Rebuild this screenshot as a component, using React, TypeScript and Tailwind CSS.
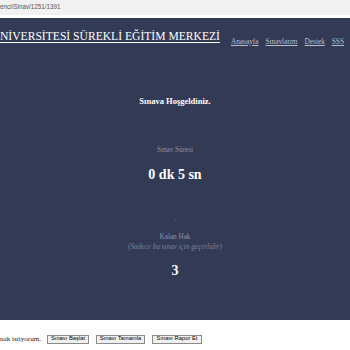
export default function App() {
  const serif = { fontFamily: '"Liberation Serif", "Times New Roman", serif' };
  const sans = { fontFamily: '"Liberation Sans", Arial, sans-serif' };
  return (
    <div className="w-[350px] h-[350px] overflow-hidden bg-white" style={serif}>
      <div className="h-[15px] bg-[#f1f1f1] flex items-center">
        <span className="text-[6.3px] leading-none text-[#555]" style={sans}>enci/Sinav/1251/1391</span>
      </div>
      <div className="h-[3px] bg-white" />
      <div className="h-[302px] bg-[#333a55] flex flex-col">
        <div className="flex items-start pt-[12px] whitespace-nowrap">
          <a className="text-[11.6px] leading-[14px] text-white underline decoration-1 underline-offset-[2px]">
            NİVERSİTESİ SÜREKLİ EĞİTİM MERKEZİ
          </a>
          <nav className="ml-[11px] mt-[4.5px] flex gap-[7px] text-[7.3px] leading-[14px] text-[#b9bdd2]">
            <a className="underline">Anasayfa</a>
            <a className="underline">Sınavlarım</a>
            <a className="underline">Destek</a>
            <a className="underline">SSS</a>
          </nav>
        </div>
        <div className="flex flex-col items-center text-center">
          <div className="mt-[47px] text-[8.5px] leading-[10px] font-bold text-white">Sınava Hoşgeldiniz.</div>
          <div className="mt-[39px] text-[7.2px] leading-[10px] text-[#8d93ab]">Sınav Süresi</div>
          <div className="mt-[12px] text-[14px] leading-[16px] font-bold text-white">0 dk 5 sn</div>
          <div className="mt-[31px] text-[7.2px] leading-[10px] text-[#8d93ab]">.</div>
          <div className="mt-[8px] text-[7.2px] leading-[10px] text-[#8d93ab]">Kalan Hak</div>
          <div className="text-[7.2px] leading-[10px] italic text-[#7d8299]">(Sadece bu sınav için geçerlidir)</div>
          <div className="mt-[11px] text-[14px] leading-[16px] font-bold text-white">3</div>
        </div>
      </div>
      <div className="flex items-center mt-[14px] whitespace-nowrap">
        <span className="text-[7.1px] leading-[10px] text-[#222]">nak istiyorum.</span>
        <div className="ml-[6px] flex gap-[7px]">
          <button className="w-[42px] h-[9px] flex items-center justify-center border border-[#8a8a8a] bg-[#efefef] text-[5.8px] leading-none text-black" style={sans}>Sınavı Başlat</button>
          <button className="w-[49px] h-[9px] flex items-center justify-center border border-[#8a8a8a] bg-[#efefef] text-[5.8px] leading-none text-black" style={sans}>Sınavı Tamamla</button>
          <button className="w-[50px] h-[9px] flex items-center justify-center border border-[#8a8a8a] bg-[#efefef] text-[5.8px] leading-none text-black" style={sans}>Sınavı Rapor Et</button>
        </div>
      </div>
    </div>
  );
}
